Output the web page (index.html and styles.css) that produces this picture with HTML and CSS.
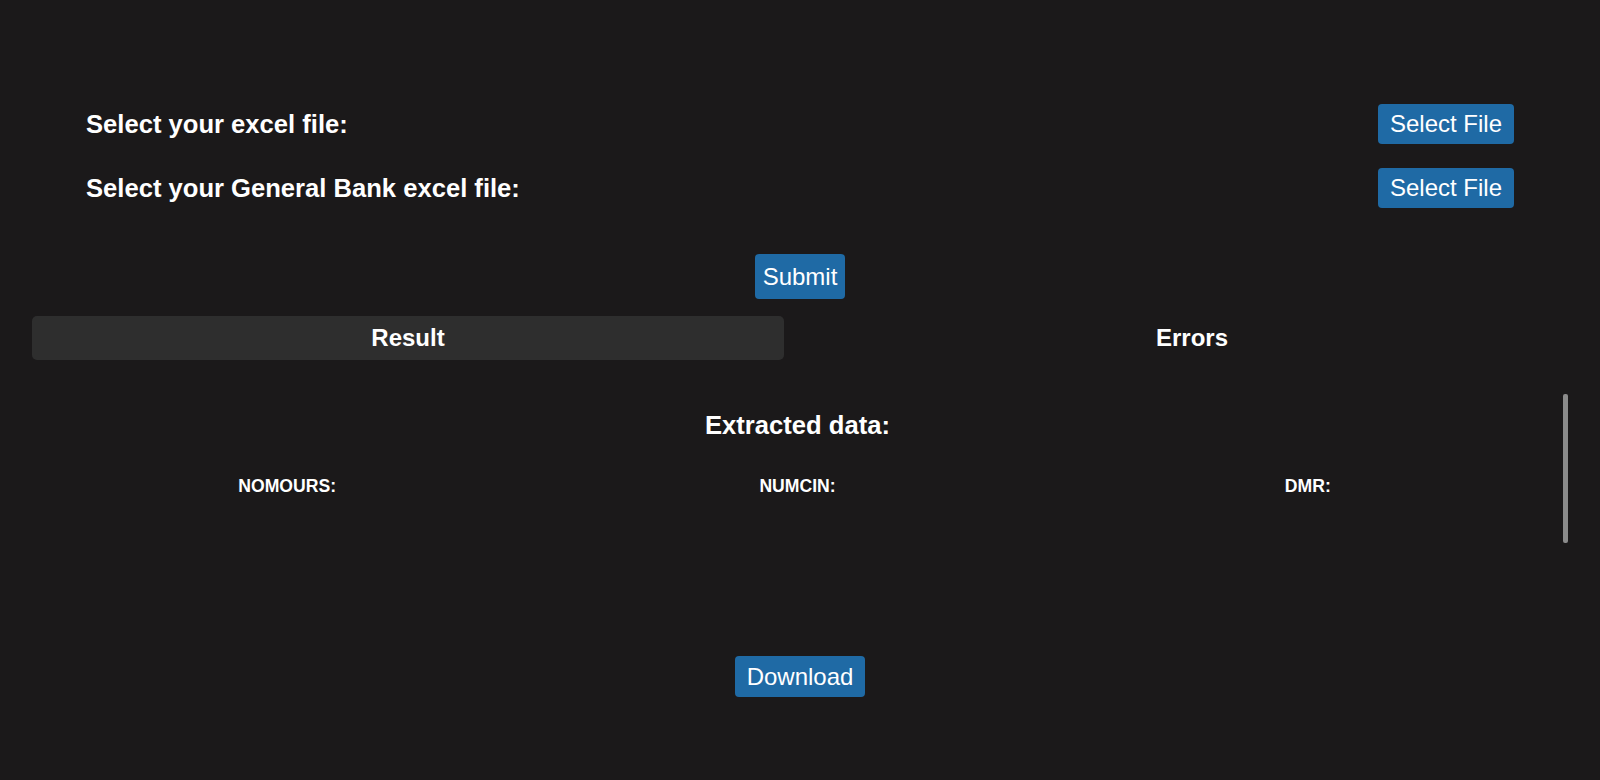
FILE: index.html
```html
<!DOCTYPE html>
<html lang="en">
<head>
<meta charset="utf-8">
<title>Excel Extractor</title>
<link rel="stylesheet" href="styles.css">
</head>
<body>
<main class="page">
  <section class="upload">
    <div class="upload-row">
      <h2 class="upload-label">Select your excel file:</h2>
      <button class="btn btn-file" type="button">Select File</button>
    </div>
    <div class="upload-row">
      <h2 class="upload-label">Select your General Bank excel file:</h2>
      <button class="btn btn-file" type="button">Select File</button>
    </div>
  </section>
  <div class="submit-wrap">
    <button class="btn btn-submit" type="button">Submit</button>
  </div>
  <nav class="tabs">
    <button class="tab tab-active" type="button">Result</button>
    <button class="tab" type="button">Errors</button>
  </nav>
  <section class="results">
    <div class="results-inner">
      <h3 class="results-title">Extracted data:</h3>
      <table class="data-table">
        <thead>
          <tr><th>NOMOURS:</th><th>NUMCIN:</th><th>DMR:</th></tr>
        </thead>
      </table>
    </div>
    <div class="scroll-thumb"></div>
  </section>
  <div class="download-wrap">
    <button class="btn btn-download" type="button">Download</button>
  </div>
</main>
</body>
</html>
```

FILE: styles.css
```css
html, body {
  margin: 0;
  padding: 0;
  background: #1b191a;
  color: #ffffff;
  font-family: "Liberation Sans", Arial, sans-serif;
}

.page {
  padding: 0 32px;
  height: 780px;
  box-sizing: border-box;
  overflow: hidden;
}

.upload {
  padding: 104px 54px 0;
  display: flex;
  flex-direction: column;
  gap: 24px;
}

.upload-row {
  display: flex;
  align-items: center;
  justify-content: space-between;
  height: 40px;
}

.upload-label {
  margin: 0;
  font-size: 25.6px;
  font-weight: bold;
  line-height: normal;
}

.btn {
  border: none;
  background: #1f6aa5;
  color: #ffffff;
  font-family: "Liberation Sans", Arial, sans-serif;
  font-size: 24px;
  border-radius: 4px;
  cursor: pointer;
}

.btn-file {
  padding: 6px 12px;
  line-height: 28px;
}

.submit-wrap {
  display: flex;
  justify-content: center;
  margin-top: 46px;
}

.btn-submit {
  padding: 8px 8px;
  line-height: 29px;
}

.tabs {
  display: flex;
  gap: 32px;
  margin-top: 17px;
}

.tab {
  flex: 1;
  height: 44px;
  border: none;
  border-radius: 5px;
  background: transparent;
  color: #ffffff;
  font-family: "Liberation Sans", Arial, sans-serif;
  font-size: 24px;
  font-weight: bold;
  padding: 0;
}

.tab-active {
  background: #2e2e2e;
}

.results {
  position: relative;
  margin-top: 34px;
  height: 230px;
  padding-right: 5px;
  overflow: hidden;
}

.scroll-thumb {
  position: absolute;
  top: 0;
  right: 0;
  width: 5px;
  height: 149px;
  background: #8b8b8b;
  border-radius: 2px;
}

.results-inner {
  min-height: 355px;
  padding-top: 17px;
  box-sizing: border-box;
}

.results-title {
  margin: 0 0 35px;
  text-align: center;
  font-size: 25.6px;
  font-weight: bold;
  line-height: normal;
}

.data-table {
  width: 100%;
  table-layout: fixed;
  border-collapse: collapse;
}

.data-table th {
  padding: 1px 0;
  text-align: center;
  font-size: 17.6px;
  font-weight: bold;
  line-height: normal;
}

.download-wrap {
  display: flex;
  justify-content: center;
  margin-top: 32px;
}

.btn-download {
  padding: 6px 12px;
  line-height: 29px;
}
```
